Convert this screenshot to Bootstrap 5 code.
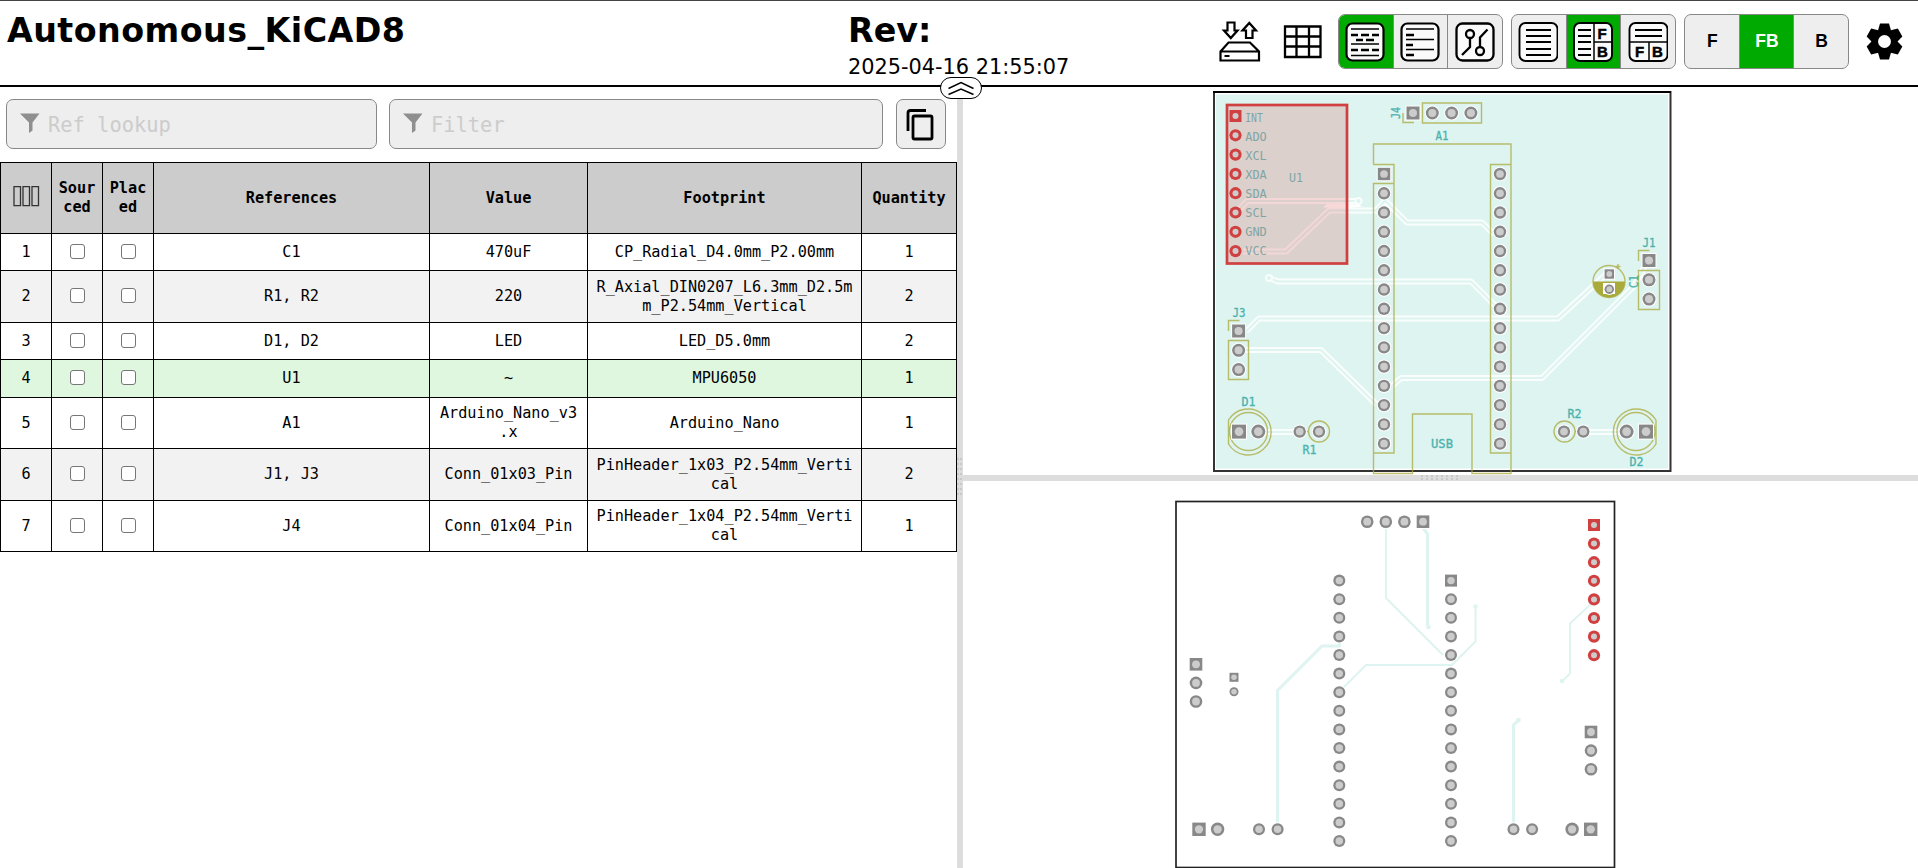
<!DOCTYPE html>
<html lang="en">
<head>
<meta charset="utf-8">
<title>Autonomous_KiCAD8</title>
<link href="https://cdn.jsdelivr.net/npm/bootstrap@5.3.0/dist/css/bootstrap.min.css" rel="stylesheet">
<style>
body{height:868px;overflow:hidden;background:#fff;color:#000;font-family:"DejaVu Sans",sans-serif;border-top:1px solid #444}
.topbar{height:86px;border-bottom:2px solid #000;position:relative}
.pcb-title,.rev-title{font-size:33.3px;font-weight:700;line-height:38px;white-space:nowrap}
.pcb-title{width:848px;padding:11px 0 0 7px;letter-spacing:.45px}
.rev-box{padding-top:11px;width:362px}
.rev-date{font-size:20.85px;line-height:24px;margin-top:5px;white-space:nowrap}
.tools{padding:13px 0 0 7px;height:84px}
.tools svg{display:block}
.tool-group{width:165px;height:55px;border:1px solid #888;border-radius:7px;overflow:hidden;background:#eee;margin-right:8px}
.tool-group .btn{flex:1 1 0;width:55px;padding:0 1px 0 0;border:0;border-radius:0;color:#000;font:bold 17.5px "Liberation Sans",sans-serif;display:flex;align-items:center;justify-content:center}
.tool-group .btn+.btn{border-left:1px solid #888}
.tool-group .btn.active{background:#0a0;color:#fff}
.tool-group .side{padding:0 0 0 1px}
.collapser{position:absolute;left:940px;top:76px;width:42px;height:22px;border:1px solid #000;border-radius:11px;background:#fff;z-index:3}
.bom-pane{width:957px}
.mono{font-family:"DejaVu Sans Mono",monospace}
.field{height:50px;border:1px solid #888;border-radius:7px;background:#eee;color:#ccc;font-size:20.4px;padding-left:12px}
.field svg{margin-bottom:4px}
.field span{padding-top:3px}
.copy-btn{width:50px;height:50px;border:1px solid #888;border-radius:7px;background:#eee;padding:0}
.filters{height:75px;padding:12px 11px 13px 6px}
.bom{width:957px;table-layout:fixed;border-collapse:collapse;font-size:15.2px;line-height:19px;text-align:center}
.bom th,.bom td{border:1px solid #000;padding:0 8px;vertical-align:middle;word-break:break-all}
.bom .tight{padding:0 6px}
.bom th{background:#ccc;font-weight:700}
.bom .even{background:#f2f2f2}
.bom .picked{background:#dff7df}
.bom .form-check-input{display:block;width:15px;height:15px;margin:-2px auto 0;border:1px solid #767676;border-radius:3px;background:#fff}
.split-v{width:6px;background:#ddd}
.split-h{height:6px;background:#ddd}
.board-pane{width:955px}
svg text{font-family:"DejaVu Sans Mono",monospace}
.tools svg text{font-family:"Liberation Sans",sans-serif;font-size:15px;fill:#000;stroke:#000;stroke-width:.5px}
</style>
</head>
<body>
<header class="topbar d-flex">
  <div class="pcb-title"><span>Autonomous_KiCAD8</span></div>
  <div class="rev-box"><div class="rev-title">Rev:</div><div class="rev-date">2025-04-16 21:55:07</div></div>
  <div class="tools d-flex align-items-start">
    <svg class="flex-shrink-0" width="121" height="55" viewBox="1217 14 121 55" fill="none" stroke="#000" stroke-width="2.200">
      <path d="M1227.500 22.500h7v8h3l-6.700 7.500-6.800-7.500h3.500zM1246 38h6.500v-7.500h3.500l-6.700-7.500-6.800 7.500h3.500z"/>
      <path d="M1220.500 51.500l8-9h21.500l9 9v9h-38.500zM1220.500 51.500h38.500M1224.500 56h5"/>
      <path d="M1285 26.500h35.500v30.500H1285zM1285 36.500h35.500M1285 46.500h35.500M1296.500 26.500V57M1309 26.500V57" stroke-width="2.300"/>
    </svg>
    <div class="tool-group d-flex flex-shrink-0">
      <button class="btn active"><svg width="40" height="40" viewBox="0 0 40 40" fill="none" stroke="#000"><rect x="1.500" y="1.500" width="37" height="37" rx="6" fill="#fafafa" stroke-width="2.200"/><path d="M6 7h28M6 22h28M6 33.500h28" stroke-width="1.300"/><path d="M6 13h7M16 13h8M27 13h7M11 18h7M21 18h8M6 28h7M16 28h8M27 28h7" stroke-width="2.300"/></svg></button>
      <button class="btn"><svg width="40" height="40" viewBox="0 0 40 40" fill="none" stroke="#000"><rect x="1.500" y="1.500" width="37" height="37" rx="6" fill="#fafafa" stroke-width="2.200"/><path d="M6 7h28M6 17.500h28M6 27.500h28" stroke-width="1.300"/><path d="M6 13h8M6 23h7M6 33h8" stroke-width="2.300"/></svg></button>
      <button class="btn"><svg width="40" height="40" viewBox="0 0 40 40" fill="none" stroke="#000" stroke-width="2.300"><rect x="1.500" y="1.500" width="37" height="37" rx="6" fill="#fafafa"/><circle cx="15" cy="12" r="4"/><circle cx="25" cy="29" r="4"/><path d="M15 16v9l-8 8M25 25v-9.500l7.500-8"/></svg></button>
    </div>
    <div class="tool-group d-flex flex-shrink-0">
      <button class="btn"><svg width="40" height="40" viewBox="0 0 40 40" fill="none" stroke="#000"><rect x="1.500" y="1" width="38" height="38" rx="6" fill="#fafafa" stroke-width="1.900"/><path d="M8 8h25M8 14h25M8 20h25M8 27h25M8 33h25" stroke-width="1.900"/></svg></button>
      <button class="btn active"><svg width="40" height="40" viewBox="0 0 40 40" fill="none" stroke="#000"><rect x="1" y="1" width="38" height="38" rx="6" fill="#fafafa" stroke-width="1.900"/><path d="M5 8h13M5 14h13M5 20h13M5 27h13M5 33h13" stroke-width="1.900"/><path d="M21 1v38M21 20h18" stroke-width="1.500"/><text x="24.500" y="16.500">F</text><text x="24" y="34.500">B</text></svg></button>
      <button class="btn"><svg width="40" height="40" viewBox="0 0 40 40" fill="none" stroke="#000"><rect x="1.500" y="1" width="38" height="38" rx="6" fill="#fafafa" stroke-width="1.900"/><path d="M7 8h27M7 14h27" stroke-width="1.900"/><path d="M1 20h38M21 20v19" stroke-width="1.500"/><text x="7" y="34.500">F</text><text x="24" y="34.500">B</text></svg></button>
    </div>
    <div class="tool-group d-flex flex-shrink-0">
      <button class="btn side">F</button><button class="btn side active">FB</button><button class="btn side">B</button>
    </div>
    <svg class="flex-shrink-0" width="54" height="55" viewBox="-27.500 -27.500 54 55"><g id="gear"><circle r="9.700" fill="none" stroke="#000" stroke-width="6.500"/></g></svg>
  </div>
  <div class="collapser"><svg class="d-block" width="40" height="20" viewBox="0 0 40 20" fill="none" stroke="#000" stroke-width="1.400"><path d="M7.500 10.500L20 4.500l12.500 6M7.500 16.500L20 11l12.500 5.500"/></svg></div>
</header>
<main class="d-flex" style="height:781px">
  <section class="bom-pane flex-shrink-0 mono">
    <div class="filters d-flex">
      <div class="field d-flex align-items-center" style="width:371px;margin-right:12px"><svg class="me-2" width="21" height="21" viewBox="0 0 21 21"><path d="M1 1.500h19.500l-7 9v8l-3.500 2.500v-10.500z" fill="#8f8f8f"/></svg><span>Ref lookup</span></div>
      <div class="field d-flex align-items-center" style="width:494px;margin-right:13px"><svg class="me-2" width="21" height="21" viewBox="0 0 21 21"><path d="M1 1.500h19.500l-7 9v8l-3.500 2.500v-10.500z" fill="#8f8f8f"/></svg><span>Filter</span></div>
      <button class="copy-btn"><svg class="d-block" width="48" height="48" viewBox="0 0 48 48" fill="none" stroke="#000" stroke-width="2.800"><path d="M29 10.500H13.500q-2.500 0-2.500 2.500V31"/><rect x="16" y="16" width="19" height="23" rx="1.500"/></svg></button>
    </div>
    <table class="bom">
      <colgroup><col style="width:51px"><col style="width:51px"><col style="width:51px"><col style="width:276px"><col style="width:158px"><col style="width:274px"><col style="width:95px"></colgroup>
      <thead><tr style="height:71px"><th class="tight"><svg style="margin-top:-4px" width="27" height="21" viewBox="0 0 27 21" fill="none" stroke="#333" stroke-width="1.300"><path d="M1 .7h6.500v19H1zM10 .7h6.500v19H10zM19 .7h6.500v19H19z"/></svg></th><th class="tight">Sour<br>ced</th><th class="tight">Plac<br>ed</th><th>References</th><th>Value</th><th>Footprint</th><th>Quantity</th></tr></thead>
      <tbody id="rows"></tbody>
    </table>
  </section>
  <div class="split-v d-flex align-items-center flex-shrink-0"><svg width="6" height="39" viewBox="0 0 6 39" stroke="#c8c8c8" stroke-width="2" stroke-dasharray="2 1"><path d="M0 1h6M0 6h6M0 11h6M0 16h6M0 21h6M0 26h6M0 31h6M0 36h6"/></svg></div>
  <section class="board-pane d-flex flex-column">
    <svg class="d-block flex-shrink-0" id="front" width="955" height="388" viewBox="963 87 955 388">
      <rect x="1214" y="92" width="456.500" height="379" fill="#fff" stroke="#333" stroke-width="2"/>
      <path d="M1213 92H1671" stroke="#000" stroke-width="2"/>
      <rect x="1216" y="94.500" width="452" height="374" fill="#def4f0"/>
      <g fill="none" stroke="#f9fdfc" stroke-width="6" stroke-linejoin="round">
        <path d="M1236 213l11-12h112M1243 251.500h43l43-41h47l9-10 22 22h75l12 12M1269 278l9 3.500h193l28 28M1246 331.500l13-13h299l52-48M1242 350h79l55 54M1392 386l9-8h141l92-92 12-22M1259 432h40M1584 432h42" />
      </g>
      <g fill="none" stroke="#def4f0" stroke-width="2" stroke-linejoin="round">
        <path d="M1236 213l11-12h112M1243 251.500h43l43-41h47l9-10 22 22h75l12 12M1269 278l9 3.500h193l28 28M1246 331.500l13-13h299l52-48M1242 350h79l55 54M1392 386l9-8h141l92-92 12-22M1259 432h40M1584 432h42"/>
      </g>
      <g fill="#def4f0" stroke="#f9fdfc" stroke-width="1.900"><circle cx="1358.500" cy="201" r="3"/><circle cx="1269" cy="278" r="3"/></g>
      <path d="M1327 203.500l32 1 3 2-17 2-22-1z" fill="#fff"/>
      <g fill="none" stroke="#a9aa3c" stroke-opacity=".75" stroke-width="1.400">
        <path d="M1403 113v9.500h11M1422.500 103h59v20h-59zM1373.500 164.500v-20.500h137.500v20M1373.500 183.500h20.500v269.500h-20.500zM1373.500 164.500h20.500v19M1490.500 164.500h20.500v288.500h-20.500zM1373.500 453v20.500h39V414h59.500v59.500h39V453"/>
        <path d="M1228.500 331v-10.500h11M1228.500 340.500h20v39h-20zM1638.500 261v-10.500h11M1638.500 270.500h21v39h-21z"/>
        <circle cx="1248.500" cy="431.500" r="19"/><path d="M1228.500 420v24a23 23 0 1 0 0-24"/><circle cx="1319" cy="431.500" r="10.500"/><circle cx="1564.500" cy="431.500" r="10.500"/><circle cx="1636" cy="431.500" r="19"/><path d="M1656 420v24a23 23 0 1 1 0-24M1306 431.500h2M1575 431.500h2M1618 264v5M1615.500 266.500h5"/><circle cx="1609" cy="281.500" r="16"/>
      </g>
      <path d="M1593 281.500h32a16 16 0 0 1-32 0z" fill="#a9aa3c"/><rect x="1603" y="283" width="12" height="11" fill="#fff"/>
      <g id="fpads"></g>
      <rect x="1227" y="105" width="120" height="158.500" fill="#d94040" fill-opacity=".2" stroke="#d04040" stroke-width="2.700"/>
      <g id="fred"></g>
      <g id="labels" font-size="12" fill="#4ab2ae" stroke="#4ab2ae" stroke-width=".3"></g>
    </svg>
    <div class="split-h flex-shrink-0 d-flex justify-content-center"><svg width="39" height="6" viewBox="0 0 39 6" stroke="#c8c8c8" stroke-width="2" stroke-dasharray="2 1"><path d="M1 0v6M6 0v6M11 0v6M16 0v6M21 0v6M26 0v6M31 0v6M36 0v6"/></svg></div>
    <svg class="d-block flex-shrink-0" id="back" width="955" height="387" viewBox="963 481 955 387">
      <rect x="1176" y="501.500" width="438.500" height="366" fill="#fff" stroke="#222" stroke-width="1.700"/>
      <g fill="none" stroke="#def4f0" stroke-width="3" stroke-linejoin="round"><path d="M1339.500 640v6H1322l-44.500 44.500V826M1423 528l4.500 6v92M1518.500 720l-5 5V826"/><path d="M1386 525v73l57 57M1341 690l25-25h86l23.500-23.500V607M1592 603l-22 20.500v50l-8 8" stroke-width="2"/></g>
      <g fill="#def4f0"><circle cx="1428.500" cy="627" r="2.300"/><circle cx="1475.500" cy="606.500" r="2.300"/><circle cx="1562" cy="681" r="2.300"/><circle cx="1518.500" cy="720" r="2.300"/></g>
      <g id="bpads"></g>
    </svg>
  </section>
</main>
<script>
  // Bill of materials rows: references, value, footprint, quantity, row height
  const rows = [
    ['C1','470uF','CP_Radial_D4.0mm_P2.00mm',1,37],
    ['R1, R2','220','R_Axial_DIN0207_L6.3mm_D2.5m<br>m_P2.54mm_Vertical',2,52],
    ['D1, D2','LED','LED_D5.0mm',2,37],
    ['U1','~','MPU6050',1,38],
    ['A1','Arduino_Nano_v3<br>.x','Arduino_Nano',1,51],
    ['J1, J3','Conn_01x03_Pin','PinHeader_1x03_P2.54mm_Verti<br>cal',2,52],
    ['J4','Conn_01x04_Pin','PinHeader_1x04_P2.54mm_Verti<br>cal',1,51]];
  const box = '<td><input type="checkbox" class="form-check-input"></td>';
  document.getElementById('rows').innerHTML = rows.map((r, i) =>
    `<tr style="height:${r[4]}px" class="${i === 3 ? 'picked' : i % 2 ? 'even' : ''}"><td>${i + 1}</td>${box}${box}<td>${r[0]}</td><td class="tight">${r[1]}</td><td class="tight">${r[2]}</td><td>${r[3]}</td></tr>`).join('');

  // A pad: ring (square for pin 1) with a drilled hole and clearance
  function pad(x, y, r, square) {
    const h = r * .62, k = r + 1;
    return square
      ? `<path d="M${x-k} ${y-k}h${2*k}v${2*k}h${-2*k}z" fill="#fff"/><path d="M${x-r} ${y-r}h${2*r}v${2*r}h${-2*r}z" fill="#888"/><circle cx="${x}" cy="${y}" r="${h}" fill="#ccc"/>`
      : `<circle cx="${x}" cy="${y}" r="${k}" fill="#fff"/><circle cx="${x}" cy="${y}" r="${r}" fill="#888"/><circle cx="${x}" cy="${y}" r="${h}" fill="#ccc"/>`;
  }
  function line(x, y, dx, dy, n, r, square) {
    let s = '';
    for (let i = 0; i < n; i++) s += pad(x + i * dx, y + i * dy, r, i === 0 && square);
    return s;
  }
  const put = (id, s) => document.getElementById(id).innerHTML = s;
  put('fpads', line(1384,174,0,19.26,15,6.2,true) + line(1500,174,0,19.26,15,6.2) +
    line(1413,113,19.3,0,4,6.5,true) + line(1649,260.5,0,19.3,3,6.5,true) + line(1238.6,331,0,19.3,3,6.5,true) +
    line(1239,431.6,19.3,0,2,7,true) + line(1299.7,431.6,19.3,0,2,6.2) + line(1564,431.6,19.3,0,2,6.2) +
    line(1646,431.6,-19.4,0,2,7,true) + line(1609.3,274,0,15.2,2,4.7,true));
  const red = (x, y, p) => { let s = ''; for (let i = 0; i < 8; i++) s += i
      ? `<circle cx="${x}" cy="${y+i*p}" r="6.1" fill="#d04040"/><circle cx="${x}" cy="${y+i*p}" r="3" fill="#ccc"/>`
      : `<path d="M${x-6} ${y-6}h12v12h-12z" fill="#d04040"/><circle cx="${x}" cy="${y}" r="3" fill="#ccc"/>`; return s; };
  put('fred', red(1235.5, 116, 19.3));
  put('bpads', line(1339.3,580.6,0,18.6,15,6) + line(1451,580.6,0,18.6,15,6,true) +
    line(1423,521.7,-18.6,0,4,6.3,true) + line(1196,664.3,0,18.6,3,6.3,true) + line(1234,677.3,0,14.4,2,4.5,true) +
    line(1199,829.3,18.6,0,2,6.7,true) + line(1259,829.3,18.6,0,2,6) + line(1513.5,829.3,18.6,0,2,6) +
    line(1590.7,829.3,-18.6,0,2,6.7,true) + line(1591,732,0,18.6,3,6.3,true) + red(1594, 525, 18.6));

  // Silkscreen labels: text, centre x, baseline y, width
  const t = (s, x, y, w, extra) => `<text x="${x}" y="${y}" text-anchor="middle" textLength="${w}" lengthAdjust="spacingAndGlyphs" ${extra || ''}>${s}</text>`;
  put('labels', t('A1',1442,139.5,13) + t('J1',1649,247,13) + t('J3',1239,317,13) + t('D1',1248.5,406,14) +
    t('R1',1309.5,454,14) + t('R2',1574.5,418,14) + t('D2',1636.5,466,14) + t('USB',1442,448,22) +
    t('J4',0,0,12,'transform="translate(1399.500 113) rotate(-90)"') + t('C1',0,0,13,'transform="translate(1638 281.500) rotate(-90)"') +
    ['INT','ADO','XCL','XDA','SDA','SCL','GND','VCC'].map((s, i) =>
      t(s,i?1256:1254,121.5+i*19.1,i?21.5:17.5,'fill="#7fa5a3" stroke="none"')).join('') + t('U1',1296,182,14,'fill="#7fa5a3" stroke="none"'));

  let teeth = '';
  for (let a = 0; a < 360; a += 60) teeth += `<path d="M-6.500 -11L-4.500 -18H4.500L6.500 -11z" transform="rotate(${a})"/>`;
  document.getElementById('gear').insertAdjacentHTML('beforeend', teeth);
</script>
<script src="https://cdn.jsdelivr.net/npm/bootstrap@5.3.0/dist/js/bootstrap.bundle.min.js"></script>
</body>
</html>
